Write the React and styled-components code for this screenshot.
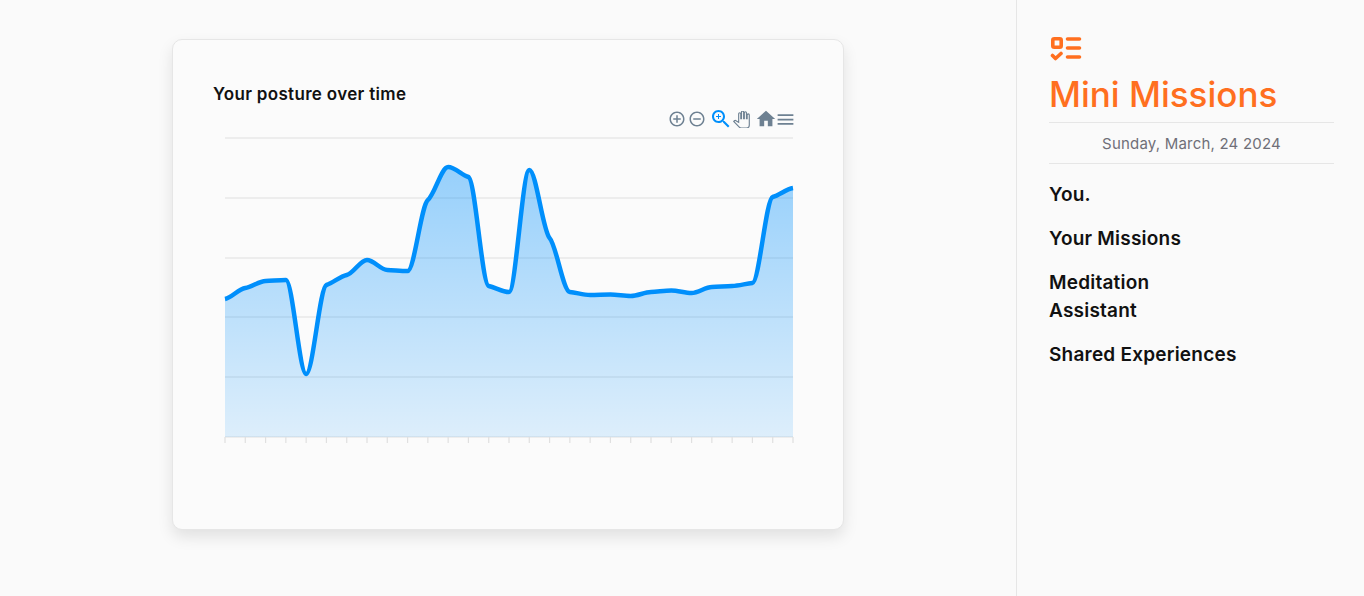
import React from "react"
import styled, {createGlobalStyle} from "styled-components"

const GlobalStyle = createGlobalStyle`
    html, body {
        margin: 0;
        height: 100%;
        background: #fafafa;
        font-family: "Inter", "Open Sans", sans-serif;
    }
`

const Page = styled.div`
    display: flex;
    height: 596px;
    overflow: hidden;
`

const Main = styled.main`
    width: 1016px;
    display: flex;
    justify-content: center;
    padding-top: 39px;
    box-sizing: border-box;
`

const Card = styled.section`
    width: 672px;
    height: 491px;
    box-sizing: border-box;
    padding: 43px 49px 0 40px;
    background: #fbfbfb;
    border: 1px solid #e6e6e6;
    border-radius: 10px;
    box-shadow: 0 7px 15px rgba(0, 0, 0, 0.1);
`

const CardTitle = styled.h2`
    margin: 0;
    font-size: 17px;
    line-height: 22px;
    font-weight: 600;
    letter-spacing: 0.32px;
    color: #111;
`

const Toolbar = styled.div`
    display: flex;
    justify-content: flex-end;
    align-items: center;
    height: 24px;
    margin: 2px -2px 0 0;
`

const ToolIcon = styled.svg`
    display: block;
    flex: none;
    width: ${({$size}) => $size}px;
    height: ${({$size}) => $size}px;
    margin-left: ${({$gap}) => $gap}px;
    fill: ${({$outline, $active}) => ($outline ? "none" : $active ? "#008ffb" : "#6e8192")};
    stroke: ${({$outline}) => ($outline ? "#6e8192" : "none")};
    stroke-width: ${({$outline}) => ($outline ? 1.6 : 0)};
`

const ChartSvg = styled.svg`
    display: block;
    margin: 6px 0 0 11px;
`

const Sidebar = styled.aside`
    width: 348px;
    box-sizing: border-box;
    padding: 36px 30px 0 32px;
    border-left: 1px solid #e6e6e6;
`

const Logo = styled.svg`
    display: block;
    margin-left: 1px;
    fill: none;
    stroke: #ff6f1f;
    stroke-width: 3.6;
    stroke-linecap: round;
    stroke-linejoin: round;
`

const BrandName = styled.h1`
    margin: 8px 0 0;
    font-size: 35px;
    line-height: 48px;
    font-weight: 550;
    color: #ff6f1f;
`

const DateLine = styled.div`
    margin-top: 4px;
    height: 40px;
    line-height: 41px;
    text-align: center;
    font-size: 15px;
    letter-spacing: 0.2px;
    color: #6f6f78;
    border-top: 1px solid #e6e6e6;
    border-bottom: 1px solid #e6e6e6;
`

const Nav = styled.nav`
    display: flex;
    flex-direction: column;
    gap: 16px;
    margin-top: 17px;
    width: 170px;
`

const NavItem = styled.a`
    font-size: 19px;
    line-height: 28px;
    font-weight: 600;
    letter-spacing: 0.22px;
    color: #111;
    white-space: ${({$wrap}) => ($wrap ? "normal" : "nowrap")};
`

const points = [299, 288, 281, 280, 374, 285, 275, 260, 270, 271, 200, 167, 177, 286, 292, 170, 238, 292, 295, 294.5, 296, 292, 290.5, 293, 287, 286, 283, 197, 188]
const X0 = 1
const STEP = 568 / 28
const Y_OFFSET = 137
const TENSION = 0.35

// cubic through the points with shallow tangents, which gives the knees of the original spline
const buildLine = () => {
    const ys = points.map((y) => y - Y_OFFSET)
    const slopes = ys.slice(1).map((y, i) => (y - ys[i]) / STEP)
    const tangents = ys.map((_, i) => {
        if (i === 0) return slopes[0] * TENSION
        if (i === ys.length - 1) return slopes[i - 1] * TENSION
        const a = slopes[i - 1]
        const b = slopes[i]
        if (a * b <= 0) return 0
        return ((2 * a * b) / (a + b)) * TENSION
    })
    let d = `M${X0} ${ys[0]}`
    for (let i = 1; i < ys.length; i++) {
        const x0 = X0 + (i - 1) * STEP
        const x1 = X0 + i * STEP
        d += ` C${x0 + STEP / 3} ${ys[i - 1] + (tangents[i - 1] * STEP) / 3} ${x1 - STEP / 3} ${ys[i] - (tangents[i] * STEP) / 3} ${x1} ${ys[i]}`
    }
    return d
}

const line = buildLine()
const gridYs = [1, 61, 121, 180, 240, 300]
const ticks = Array.from({length: 29}, (_, i) => X0 + i * STEP)

const PostureChart = () => (
    <ChartSvg width="572" height="310" viewBox="0 0 572 310">
        <defs>
            <linearGradient id="postureFill" x1="0" y1="0" x2="0" y2="1">
                <stop offset="0" stopColor="#008ffb" stopOpacity="0.4" />
                <stop offset="1" stopColor="#008ffb" stopOpacity="0.12" />
            </linearGradient>
        </defs>
        {gridYs.map((y) => (
            <line key={y} x1={X0} x2={X0 + 568} y1={y} y2={y} stroke="#e0e0e0" strokeWidth="1.2" />
        ))}
        {ticks.map((x) => (
            <line key={x} x1={x} x2={x} y1={300} y2={306} stroke="#e0e0e0" strokeWidth="1.2" />
        ))}
        <path d={`${line} L${X0 + 568} 300 L${X0} 300 Z`} fill="url(#postureFill)" />
        <path d={line} fill="none" stroke="#008ffb" strokeWidth="4.5" />
    </ChartSvg>
)

const App = () => (
    <Page>
        <GlobalStyle />
        <Main>
            <Card>
                <CardTitle>Your posture over time</CardTitle>
                <Toolbar>
                    <ToolIcon $size={18} viewBox="0 0 24 24">
                        <path d="M13 7h-2v4H7v2h4v4h2v-4h4v-2h-4V7zm-1-5C6.48 2 2 6.48 2 12s4.48 10 10 10 10-4.48 10-10S17.52 2 12 2zm0 18c-4.41 0-8-3.59-8-8s3.59-8 8-8 8 3.59 8 8-3.59 8-8 8z" />
                    </ToolIcon>
                    <ToolIcon $size={18} $gap={2} viewBox="0 0 24 24">
                        <path d="M7 11v2h10v-2H7zm5-9C6.48 2 2 6.48 2 12s4.48 10 10 10 10-4.48 10-10S17.52 2 12 2zm0 18c-4.41 0-8-3.59-8-8s3.59-8 8-8 8 3.59 8 8-3.59 8-8 8z" />
                    </ToolIcon>
                    <ToolIcon $size={24} $gap={3} $active viewBox="0 0 24 24">
                        <path d="M15.5 14h-.79l-.28-.27C15.41 12.59 16 11.11 16 9.5 16 5.91 13.09 3 9.5 3S3 5.91 3 9.5 5.91 16 9.5 16c1.61 0 3.09-.59 4.23-1.57l.27.28v.79l5 4.99L20.49 19l-4.99-5zm-6 0C7.01 14 5 11.99 5 9.5S7.01 5 9.5 5 14 7.01 14 9.5 11.99 14 9.5 14z" />
                        <path d="M12 10h-2v2H9v-2H7V9h2V7h1v2h2v1z" />
                    </ToolIcon>
                    <ToolIcon $size={17} $gap={0} $outline viewBox="0 0 24 24">
                        <path d="M23 5.5V20c0 2.2-1.8 4-4 4h-7.3c-1.08 0-2.1-.43-2.85-1.19L1 14.83s1.26-1.23 1.3-1.25c.22-.19.49-.29.79-.29.22 0 .42.06.6.16.04.01 4.31 2.46 4.31 2.46V4c0-.83.67-1.5 1.5-1.5S11 3.17 11 4v7h1V1.5c0-.83.67-1.5 1.5-1.5S15 .67 15 1.5V11h1V2.5c0-.83.67-1.5 1.5-1.5s1.5.67 1.5 1.5V11h1V5.5c0-.83.67-1.5 1.5-1.5s1.5.67 1.5 1.5z" />
                    </ToolIcon>
                    <ToolIcon $size={22} $gap={5} viewBox="0 0 24 24">
                        <path d="M10 20v-6h4v6h5v-8h3L12 3 2 12h3v8z" />
                    </ToolIcon>
                    <ToolIcon $size={21} $gap={-2} viewBox="0 0 24 24">
                        <path d="M3 18h18v-2H3v2zm0-5h18v-2H3v2zm0-7v2h18V6H3z" />
                    </ToolIcon>
                </Toolbar>
                <PostureChart />
            </Card>
        </Main>
        <Sidebar>
            <Logo width="32" height="26" viewBox="0 0 32 26">
                <rect x="2.8" y="2.8" width="8.4" height="8.4" rx="1.5" />
                <path d="M17.5 3h12M17.5 12h12M17.5 21h12" />
                <path d="M2.5 19.5l3 3 5.5-5" />
            </Logo>
            <BrandName>Mini Missions</BrandName>
            <DateLine>Sunday, March, 24 2024</DateLine>
            <Nav>
                <NavItem>You.</NavItem>
                <NavItem>Your Missions</NavItem>
                <NavItem $wrap>Meditation Assistant</NavItem>
                <NavItem>Shared Experiences</NavItem>
            </Nav>
        </Sidebar>
    </Page>
)

export default App
